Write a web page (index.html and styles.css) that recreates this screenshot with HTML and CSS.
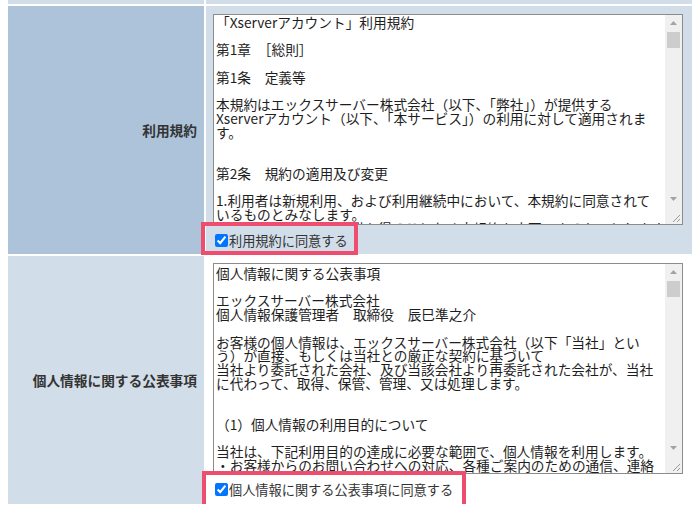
FILE: index.html
```html
<!DOCTYPE html>
<html lang="ja">
<head>
<meta charset="utf-8">
<title>規約への同意</title>
<link rel="stylesheet" href="styles.css">
</head>
<body>
<div class="sheet">
  <div class="cell prev"></div>
  <div class="cell prev"></div>

  <div class="cell head head-dark">利用規約</div>
  <div class="cell body body-light">
    <div class="box">
      <div class="text">「Xserverアカウント」利用規約

第1章　［総則］

第1条　定義等

本規約はエックスサーバー株式会社（以下、「弊社」）が提供する
Xserverアカウント（以下、「本サービス」）の利用に対して適用されま
す。


第2条　規約の適用及び変更

1.利用者は新規利用、および利用継続中において、本規約に同意されて
いるものとみなします。
2.弊社は、利用者の承諾を得ることなく本規約を変更できるものとします。</div>
      <div class="sbar">
        <div class="btn btn-up"><svg width="7" height="4" viewBox="0 0 7 4"><path d="M0 4 L3.5 0 L7 4 Z" fill="#a3a3a3"/></svg></div>
        <div class="track"><div class="thumb"></div></div>
        <div class="btn"><svg width="7" height="4" viewBox="0 0 7 4"><path d="M0 0 L3.5 4 L7 0 Z" fill="#a3a3a3"/></svg></div>
        <div class="corner"><svg width="17" height="17" viewBox="0 0 17 17"><path d="M15 8 L8 15 M15 12 L12 15" stroke="#9a9a9a" stroke-width="1"/></svg></div>
      </div>
    </div>
    <label class="agree agree-1"><input type="checkbox" checked>利用規約に同意する</label>
  </div>

  <div class="cell head head-light">個人情報に関する公表事項</div>
  <div class="cell body body-white">
    <div class="box">
      <div class="text text-2">個人情報に関する公表事項

エックスサーバー株式会社
個人情報保護管理者　取締役　辰巳準之介

お客様の個人情報は、エックスサーバー株式会社（以下「当社」とい
う）が直接、もしくは当社との厳正な契約に基づいて
当社より委託された会社、及び当該会社より再委託された会社が、当社
に代わって、取得、保管、管理、又は処理します。


（1）個人情報の利用目的について

当社は、下記利用目的の達成に必要な範囲で、個人情報を利用します。
・お客様からのお問い合わせへの対応、各種ご案内のための通信、連絡</div>
      <div class="sbar">
        <div class="btn btn-up"><svg width="7" height="4" viewBox="0 0 7 4"><path d="M0 4 L3.5 0 L7 4 Z" fill="#a3a3a3"/></svg></div>
        <div class="track"><div class="thumb"></div></div>
        <div class="btn"><svg width="7" height="4" viewBox="0 0 7 4"><path d="M0 0 L3.5 4 L7 0 Z" fill="#a3a3a3"/></svg></div>
        <div class="corner"><svg width="17" height="17" viewBox="0 0 17 17"><path d="M15 8 L8 15 M15 12 L12 15" stroke="#9a9a9a" stroke-width="1"/></svg></div>
      </div>
    </div>
    <label class="agree agree-2"><input type="checkbox" checked>個人情報に関する公表事項に同意する</label>
  </div>
</div>
</body>
</html>
```

FILE: styles.css
```css
html, body {
  margin: 0;
  padding: 0;
  background: #ffffff;
}

body {
  font-family: "Noto Sans CJK JP", "Noto Sans", sans-serif;
  color: #333333;
}

.sheet {
  display: grid;
  grid-template-columns: 196px 486px;
  grid-template-rows: 4px 248px 248px;
  gap: 2px;
  margin: 0 8px;
}

.prev {
  background: #d1dde9;
}

.head {
  display: flex;
  align-items: center;
  justify-content: flex-end;
  padding-right: 7px;
  font-size: 13.7px;
  font-weight: bold;
  color: #333333;
}

.head-dark {
  background: #adc3da;
}

.head-light {
  background: #d1dde9;
}

.body {
  padding: 8px 9px 0 7px;
}

.body-light {
  background: #d1dde9;
}

.body-white {
  background: #ffffff;
  padding-top: 7px;
}

.box {
  display: flex;
  width: 470px;
  height: 211px;
  box-sizing: border-box;
  border: 1px solid #8c8c8c;
  background: #ffffff;
}

.text {
  flex: 1;
  overflow: hidden;
  padding: 1px 2px;
  white-space: pre;
  font-size: 13.7px;
  line-height: 13.7px;
  color: #1e1e1e;
}

.text-2 {
  padding-top: 3px;
}

.sbar {
  width: 17px;
  display: flex;
  flex-direction: column;
  background: #f0f0f0;
}

.btn {
  height: 17px;
  display: flex;
  align-items: center;
  justify-content: center;
}

.btn-up {
  height: 16px;
}

.track {
  flex: 1;
}

.thumb {
  margin: 1px 2px 0 2px;
  height: 16px;
  background: #cdcdcd;
}

.corner {
  height: 17px;
  display: flex;
}

.agree {
  position: relative;
  display: inline-flex;
  align-items: center;
  height: 20px;
  margin-top: 5px;
  font-size: 13.2px;
  color: #333333;
}

.agree input {
  width: 13px;
  height: 13px;
  margin: 0 1px 0 2px;
  accent-color: #0075ff;
}

.agree::after {
  content: "";
  position: absolute;
  left: -12px;
  right: -10px;
  top: -8px;
  bottom: -5px;
  border: 4px solid #ef4d6d;
  pointer-events: none;
}

.agree-2::after {
  left: -11px;
  right: -13px;
  bottom: -9px;
}
```
